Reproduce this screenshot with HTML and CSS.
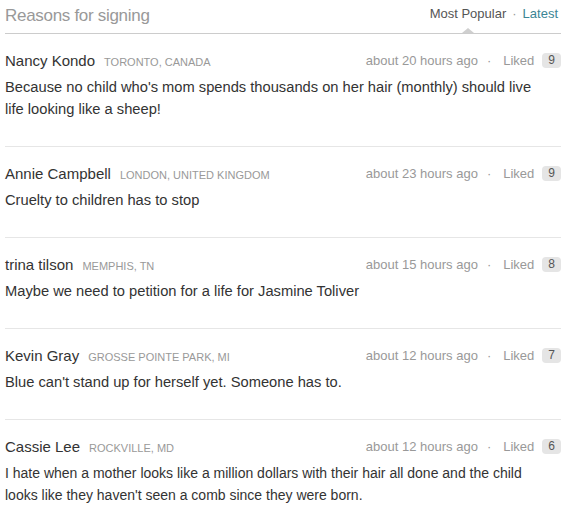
FILE: index.html
```html
<!DOCTYPE html>
<html>
<head>
<meta charset="utf-8">
<link rel="stylesheet" href="styles.css">
</head>
<body>
<div class="panel">
  <div class="head">
    <h2 class="title">Reasons for signing</h2>
    <div class="tabs">
      <span class="tab active">Most Popular</span>
      <span class="dot">·</span>
      <span class="tab link">Latest</span>
    </div>
  </div>
  <ul class="list">
    <li class="item">
      <div class="meta">
        <div class="who"><span class="name">Nancy Kondo</span><span class="loc">Toronto, Canada</span></div>
        <div class="info"><span class="time">about 20 hours ago</span><span class="sep">·</span><span class="liked">Liked</span><span class="badge">9</span></div>
      </div>
      <p class="text">Because no child who's mom spends thousands on her hair (monthly) should live life looking like a sheep!</p>
    </li>
    <li class="item">
      <div class="meta">
        <div class="who"><span class="name">Annie Campbell</span><span class="loc">London, United Kingdom</span></div>
        <div class="info"><span class="time">about 23 hours ago</span><span class="sep">·</span><span class="liked">Liked</span><span class="badge">9</span></div>
      </div>
      <p class="text">Cruelty to children has to stop</p>
    </li>
    <li class="item">
      <div class="meta">
        <div class="who"><span class="name">trina tilson</span><span class="loc">Memphis, TN</span></div>
        <div class="info"><span class="time">about 15 hours ago</span><span class="sep">·</span><span class="liked">Liked</span><span class="badge">8</span></div>
      </div>
      <p class="text">Maybe we need to petition for a life for Jasmine Toliver</p>
    </li>
    <li class="item">
      <div class="meta">
        <div class="who"><span class="name">Kevin Gray</span><span class="loc">Grosse Pointe Park, MI</span></div>
        <div class="info"><span class="time">about 12 hours ago</span><span class="sep">·</span><span class="liked">Liked</span><span class="badge">7</span></div>
      </div>
      <p class="text">Blue can't stand up for herself yet. Someone has to.</p>
    </li>
    <li class="item">
      <div class="meta">
        <div class="who"><span class="name">Cassie Lee</span><span class="loc">Rockville, MD</span></div>
        <div class="info"><span class="time">about 12 hours ago</span><span class="sep">·</span><span class="liked">Liked</span><span class="badge">6</span></div>
      </div>
      <p class="text text-compact">I hate when a mother looks like a million dollars with their hair all done and the child looks like they haven't seen a comb since they were born.</p>
    </li>
  </ul>
</div>
</body>
</html>
```

FILE: styles.css
```css
html, body {
  margin: 0;
  padding: 0;
  background: #fff;
}
body {
  font-family: "Liberation Sans", Arial, Helvetica, sans-serif;
  color: #333;
}
.panel {
  margin: 0 10px 0 5px;
}
.head {
  display: flex;
  justify-content: space-between;
  align-items: flex-end;
  height: 33px;
  border-bottom: 1px solid #cccccc;
}
.title {
  margin: 0;
  font-size: 17px;
  letter-spacing: -0.3px;
  font-weight: normal;
  color: #999;
  line-height: 22px;
  padding-bottom: 6px;
}
.tabs {
  display: flex;
  align-items: center;
  font-size: 13px;
  line-height: 16px;
  padding-bottom: 11px;
  padding-right: 3px;
}
.tab.active {
  color: #555;
  position: relative;
}
.tab.active::after {
  content: "";
  position: absolute;
  left: 50%;
  bottom: -11px;
  margin-left: -6px;
  border-left: 6px solid transparent;
  border-right: 6px solid transparent;
  border-bottom: 5px solid #cfcfcf;
}
.tab.link {
  color: #3b8595;
}
.dot {
  color: #999;
  margin: 0 6px;
}
.list {
  list-style: none;
  margin: 0;
  padding: 0;
}
.item {
  padding: 15px 0 26px;
  border-bottom: 1px solid #e6e6e6;
}
.item:last-child {
  border-bottom: none;
}
.meta {
  display: flex;
  justify-content: space-between;
  align-items: center;
  height: 22px;
}
.who {
  display: flex;
  align-items: baseline;
}
.name {
  font-size: 15px;
  color: #333;
}
.loc {
  font-size: 11px;
  text-transform: uppercase;
  color: #999;
  margin-left: 9px;
}
.info {
  display: flex;
  align-items: center;
  font-size: 13px;
  color: #999;
}
.sep {
  margin: 0 12px 0 9px;
}
.badge {
  margin-left: 8px;
  background: #e5e5e5;
  color: #555;
  font-size: 12px;
  line-height: 15px;
  padding: 0 6px;
  border-radius: 4px;
}
.text {
  margin: 5px 0 0;
  font-size: 14.7px;
  line-height: 22px;
  color: #333;
  max-width: 528px;
}
.text-compact {
  font-size: 14px;
  max-width: 527px;
}
```
